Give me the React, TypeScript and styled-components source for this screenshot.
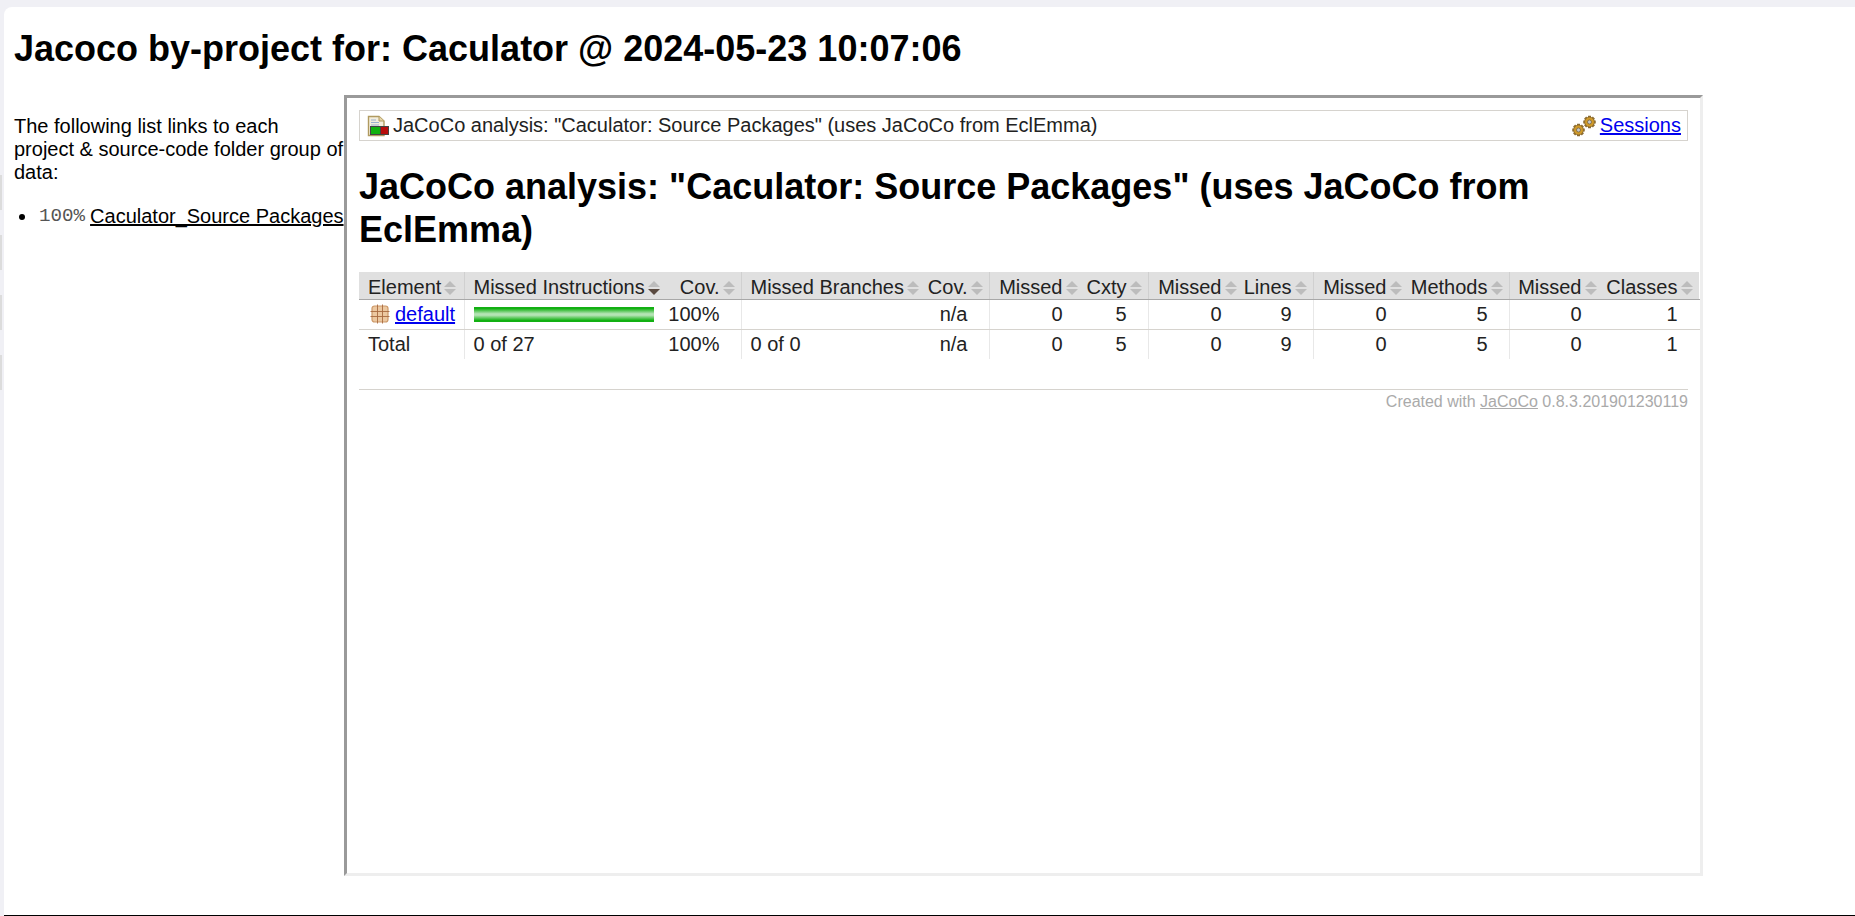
import React from 'react'
import styled, { createGlobalStyle } from 'styled-components'

const sans = '"Liberation Sans", Arial, sans-serif'

type Column = { label: string; width: number; left?: boolean; divider?: boolean }

const columns: Column[] = [
  { label: 'Element', width: 105, left: true, divider: true },
  { label: 'Missed Instructions', width: 200, left: true },
  { label: 'Cov.', width: 77, divider: true },
  { label: 'Missed Branches', width: 184, left: true },
  { label: 'Cov.', width: 64, divider: true },
  { label: 'Missed', width: 95 },
  { label: 'Cxty', width: 64, divider: true },
  { label: 'Missed', width: 95 },
  { label: 'Lines', width: 70, divider: true },
  { label: 'Missed', width: 95 },
  { label: 'Methods', width: 101, divider: true },
  { label: 'Missed', width: 94 },
  { label: 'Classes', width: 96 },
]

const Global = createGlobalStyle`
  html, body {
    margin: 0;
    height: 916px;
    overflow: hidden;
    background: #f0f0f5;
    font-family: ${sans};
  }
`

const Shell = styled.div`
  display: flex;
  height: 916px;
`

const Rail = styled.div`
  box-sizing: border-box;
  width: 4px;
  flex: none;
  padding-top: 175px;
  display: flex;
  flex-direction: column;
  gap: 25px;
`

const RailTick = styled.div`
  width: 2px;
  height: 35px;
  background: #dcdcdc;
`

const Card = styled.main`
  box-sizing: border-box;
  flex: 1;
  margin-top: 7px;
  background: #fff;
  border-top-left-radius: 8px;
  border-bottom: 1px solid #000;
  padding: 0 10px;
`

const Title = styled.h1`
  margin: 0;
  padding-top: 20px;
  height: 88px;
  box-sizing: border-box;
  font-size: 36px;
  line-height: 43px;
  font-weight: 700;
  color: #000;
`

const Columns = styled.div`
  display: flex;
  align-items: flex-start;
`

const Side = styled.aside`
  width: 330px;
  flex: none;
  padding-top: 20px;
  font-size: 20px;
  line-height: 23px;
  color: #000;
`

const Intro = styled.p`
  margin: 0 0 21px;
`

const SideList = styled.ul`
  margin: 0;
  padding: 0 0 0 5px;
  list-style: none;
  white-space: nowrap;
`

const SideItem = styled.li`
  display: flex;
  align-items: center;
`

const Dot = styled.span`
  width: 6px;
  height: 6px;
  flex: none;
  margin-right: 14px;
  border-radius: 50%;
  background: #000;
`

const Percent = styled.span`
  font-family: "Liberation Mono", monospace;
  font-size: 19.2px;
  color: #555;
  margin-right: 5px;
`

const SideLink = styled.a`
  color: #000;
  text-decoration: underline;
  text-decoration-thickness: 2px;
`

const Frame = styled.section`
  box-sizing: border-box;
  width: 1359px;
  height: 781px;
  flex: none;
  border: 3px solid;
  border-color: #9a9a9a #eeeeee #eeeeee #9a9a9a;
  background: #fff;
  padding: 12px 0 0 12px;
  overflow: hidden;
`

const Crumbs = styled.div`
  box-sizing: border-box;
  width: 1329px;
  height: 31px;
  display: flex;
  align-items: center;
  justify-content: space-between;
  border: 1px solid #d6d3ce;
  padding: 0 6px 0 7px;
  font-size: 20px;
  color: #222;
`

const CrumbPart = styled.span`
  display: flex;
  align-items: center;
  gap: 4px;
`

const BlueLink = styled.a`
  color: #0000ee;
  text-decoration: underline;
`

const Heading = styled.h1`
  margin: 24px 0 0;
  width: 1329px;
  font-size: 36px;
  line-height: 43px;
  font-weight: 700;
  color: #000;
`

const Coverage = styled.table`
  margin-top: 21px;
  table-layout: fixed;
  width: 1340px;
  border-collapse: collapse;
  font-size: 20px;
  color: #222;
`

const HeadCell = styled.th<{ $left?: boolean; $divider?: boolean }>`
  box-sizing: border-box;
  height: 27px;
  padding: 5px 6px 0 ${p => (p.$left ? '9px' : '0')};
  background: #e0e0e0;
  border-bottom: 1px solid #a8a8a8;
  border-right: 1px solid ${p => (p.$divider ? '#d0d0d0' : 'transparent')};
  font-weight: 400;
  line-height: 21px;
  text-align: ${p => (p.$left ? 'left' : 'right')};
  white-space: nowrap;
`

const Cell = styled.td<{ $left?: boolean; $divider?: boolean; $last?: boolean }>`
  box-sizing: border-box;
  height: 30px;
  padding: 0 ${p => (p.$left ? '0' : '21px')} 0 ${p => (p.$left ? '9px' : '0')};
  border-bottom: ${p => (p.$last ? 'none' : '1px solid #d6d3ce')};
  border-right: 1px solid ${p => (p.$divider ? '#e8e8e8' : 'transparent')};
  text-align: ${p => (p.$left ? 'left' : 'right')};
  white-space: nowrap;
`

const ElementLink = styled.div`
  display: flex;
  align-items: center;
  gap: 5px;
  padding-left: 2px;
`

const Bar = styled.div`
  width: 180px;
  height: 15px;
  background: linear-gradient(#12b012 0, #12b012 10%, #b4e4b4 45%, #b4e4b4 55%, #12b012 90%, #12b012 100%);
`

const SortMark = styled.svg`
  width: 12px;
  height: 16px;
  margin-left: 3px;
  vertical-align: -2px;
`

const Footer = styled.footer`
  width: 1329px;
  margin-top: 30px;
  border-top: 1px solid #d6d3ce;
  padding-top: 2px;
  text-align: right;
  font-size: 16px;
  line-height: 20px;
  color: #aaaaaa;
`

const FooterLink = styled.a`
  color: #aaaaaa;
  text-decoration: underline;
`

function Sort({ active }: { active?: boolean }) {
  return (
    <SortMark viewBox="0 0 12 16">
      <path d="M6 1 L12 7 L0 7 Z" fill="#bcbcbc" />
      <path d="M0 9 L12 9 L6 15 Z" fill={active ? '#5a4a40' : '#bcbcbc'} />
    </SortMark>
  )
}

function ReportIcon() {
  return (
    <svg width="22" height="22" viewBox="0 0 22 22">
      <path d="M1.5 1.5 H12 L17 6 V20.5 H1.5 Z" fill="#f4eedc" stroke="#b09a60" strokeWidth="1.4" />
      <path d="M12 1.5 V6 H17" fill="#e6d6a8" stroke="#b09a60" />
      <path d="M4 5 H9 M4 7.5 H12 M4 10 H12" stroke="#9ab0d0" strokeWidth="1" />
      <rect x="3" y="11" width="19" height="9" fill="#444" />
      <rect x="4" y="12" width="9" height="7" fill="#10b010" />
      <rect x="14" y="12" width="7" height="7" fill="#b80c0c" />
    </svg>
  )
}

function Gear({ x, y, r }: { x: number; y: number; r: number }) {
  const teeth = [0, 45, 90, 135]
  return (
    <g>
      {teeth.map(a => (
        <rect
          key={a}
          x={x - r * 0.28}
          y={y - r * 1.18}
          width={r * 0.56}
          height={r * 2.36}
          fill="#8a6a30"
          transform={`rotate(${a} ${x} ${y})`}
        />
      ))}
      <circle cx={x} cy={y} r={r * 0.92} fill="#d09a28" stroke="#8a6a30" strokeWidth="0.8" />
      <circle cx={x} cy={y} r={r * 0.38} fill="#c8c8c8" stroke="#6a5a40" strokeWidth="0.7" />
    </g>
  )
}

function GearsIcon() {
  return (
    <svg width="24" height="22" viewBox="0 0 24 22">
      <Gear x={17.5} y={7} r={5.3} />
      <Gear x={6.5} y={15} r={5.3} />
    </svg>
  )
}

function PackageIcon() {
  return (
    <svg width="20" height="20" viewBox="0 0 20 20">
      <rect x="2" y="2" width="16" height="16" rx="2.5" fill="#ecc8a0" stroke="#cc9868" strokeWidth="1.2" />
      <path d="M7.5 0.5 V19.5 M12.5 0.5 V19.5 M0.5 7.5 H19.5 M0.5 12.5 H19.5" stroke="#a86a40" strokeWidth="0.9" />
    </svg>
  )
}

const defaultRow = ['', '', '100%', '', 'n/a', '0', '5', '0', '9', '0', '5', '0', '1']
const totalRow = ['Total', '0 of 27', '100%', '0 of 0', 'n/a', '0', '5', '0', '9', '0', '5', '0', '1']

export default function App() {
  return (
    <Shell>
      <Global />
      <Rail>
        <RailTick />
        <RailTick />
        <RailTick />
        <RailTick />
      </Rail>
      <Card>
        <Title>Jacoco by-project for: Caculator @ 2024-05-23 10:07:06</Title>
        <Columns>
          <Side>
            <Intro>
              The following list links to each
              <br />
              project &amp; source-code folder group of data:
            </Intro>
            <SideList>
              <SideItem>
                <Dot />
                <Percent>100%</Percent>
                <SideLink href="#">Caculator_Source Packages</SideLink>
              </SideItem>
            </SideList>
          </Side>
          <Frame>
            <Crumbs>
              <CrumbPart>
                <ReportIcon />
                JaCoCo analysis: "Caculator: Source Packages" (uses JaCoCo from EclEmma)
              </CrumbPart>
              <CrumbPart>
                <GearsIcon />
                <BlueLink href="#">Sessions</BlueLink>
              </CrumbPart>
            </Crumbs>
            <Heading>JaCoCo analysis: "Caculator: Source Packages" (uses JaCoCo from EclEmma)</Heading>
            <Coverage>
              <colgroup>
                {columns.map((c, i) => (
                  <col key={i} style={{ width: c.width }} />
                ))}
              </colgroup>
              <thead>
                <tr>
                  {columns.map((c, i) => (
                    <HeadCell key={i} $left={c.left} $divider={c.divider}>
                      {c.label}
                      <Sort active={i === 1} />
                    </HeadCell>
                  ))}
                </tr>
              </thead>
              <tbody>
                <tr>
                  {defaultRow.map((v, i) => (
                    <Cell key={i} $left={columns[i].left} $divider={columns[i].divider}>
                      {i === 0 ? (
                        <ElementLink>
                          <PackageIcon />
                          <BlueLink href="#">default</BlueLink>
                        </ElementLink>
                      ) : i === 1 ? (
                        <Bar />
                      ) : (
                        v
                      )}
                    </Cell>
                  ))}
                </tr>
                <tr>
                  {totalRow.map((v, i) => (
                    <Cell key={i} $left={columns[i].left} $divider={columns[i].divider} $last>
                      {v}
                    </Cell>
                  ))}
                </tr>
              </tbody>
            </Coverage>
            <Footer>
              Created with <FooterLink href="#">JaCoCo</FooterLink> 0.8.3.201901230119
            </Footer>
          </Frame>
        </Columns>
      </Card>
    </Shell>
  )
}
